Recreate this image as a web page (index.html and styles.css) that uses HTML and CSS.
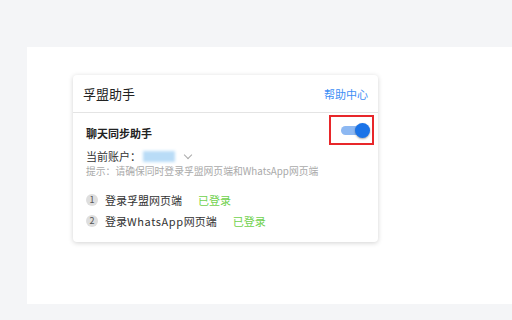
FILE: index.html
```html
<!DOCTYPE html>
<html lang="zh-CN">

<head>
    <meta charset="UTF-8">
    <title>孚盟助手</title>
    <link rel="stylesheet" href="styles.css">
</head>

<body>
    <div class="page">
        <div class="popup">
            <div class="popup-head">
                <span class="popup-title">孚盟助手</span>
                <a class="help">帮助中心</a>
            </div>
            <div class="popup-body">
                <div class="sync-row">
                    <span class="sync-title">聊天同步助手</span>
                    <div class="switch-box">
                        <div class="switch"><span class="knob"></span></div>
                    </div>
                </div>
                <div class="account">当前账户：<span class="account-name"></span><span class="chevron"></span></div>
                <p class="tip">提示：请确保同时登录孚盟网页端和WhatsApp网页端</p>
                <ul class="steps">
                    <li><span class="num">1</span><span class="step-text">登录孚盟网页端</span><span class="state">已登录</span></li>
                    <li><span class="num">2</span><span class="step-text">登录<span class="latin">WhatsApp</span>网页端</span><span class="state">已登录</span></li>
                </ul>
            </div>
        </div>
    </div>
</body>

</html>
```

FILE: styles.css
```css
* {
    padding: 0;
    margin: 0;
    box-sizing: border-box;
}
body {
    background: #f4f5f7;
    font-family: "Noto Sans CJK SC", "Noto Sans", sans-serif;
    color: #333;
    height: 320px;
    overflow: hidden;
}
.page {
    margin: 47px 0 0 27px;
    height: 257px;
    background: #fff;
    padding: 28px 0 0 46px;
}
.popup {
    width: 305px;
    height: 167px;
    background: #fff;
    border-radius: 4px;
    box-shadow: 0 1px 5px rgba(0, 0, 0, 0.18);
}
.popup-head {
    height: 38px;
    padding: 0 10px;
    display: flex;
    align-items: center;
    justify-content: space-between;
    border-bottom: 1px solid #e4e4e4;
}
.popup-title {
    font-size: 13px;
    color: #222;
}
.help {
    font-size: 11px;
    color: #3d8ef5;
}
.popup-body {
    padding: 0 4px 0 13px;
}
.sync-row {
    display: flex;
    align-items: center;
    justify-content: space-between;
    height: 32px;
    margin-top: 1px;
}
.sync-title {
    font-size: 11px;
    font-weight: 600;
    color: #222;
    padding-top: 5px;
}
.switch-box {
    width: 45px;
    height: 30px;
    border: 2px solid #e8272a;
    display: flex;
    align-items: center;
    justify-content: center;
}
.switch {
    position: relative;
    width: 24px;
    height: 9px;
    border-radius: 5px;
    background: #8db8f2;
    margin-left: 2px;
}
.knob {
    position: absolute;
    right: -5px;
    top: -3px;
    width: 15px;
    height: 15px;
    border-radius: 50%;
    background: #1a73e8;
    box-shadow: 0 1px 2px rgba(0, 0, 0, 0.35);
}
.account {
    display: flex;
    align-items: center;
    font-size: 11px;
    height: 16px;
    margin-top: 2px;
}
.account-name {
    display: inline-block;
    width: 32px;
    height: 11px;
    background: #b9dcf7;
    filter: blur(1.5px);
    margin-left: 2px;
}
.chevron {
    display: inline-block;
    width: 6px;
    height: 6px;
    border-right: 1px solid #aaa;
    border-bottom: 1px solid #aaa;
    transform: rotate(45deg);
    margin: -3px 0 0 10px;
}
.tip {
    font-size: 9.8px;
    color: #aaa;
    line-height: 15px;
}
.steps {
    list-style: none;
    margin-top: 10px;
}
.steps li {
    display: flex;
    align-items: center;
    height: 21px;
    font-size: 11px;
}
.latin {
    letter-spacing: 0.6px;
}
.num {
    width: 12px;
    height: 12px;
    border-radius: 50%;
    background: #dedede;
    color: #555;
    font-size: 9px;
    display: flex;
    align-items: center;
    justify-content: center;
    margin-right: 7px;
}
.state {
    color: #6fd14d;
    margin-left: 16px;
}
```
